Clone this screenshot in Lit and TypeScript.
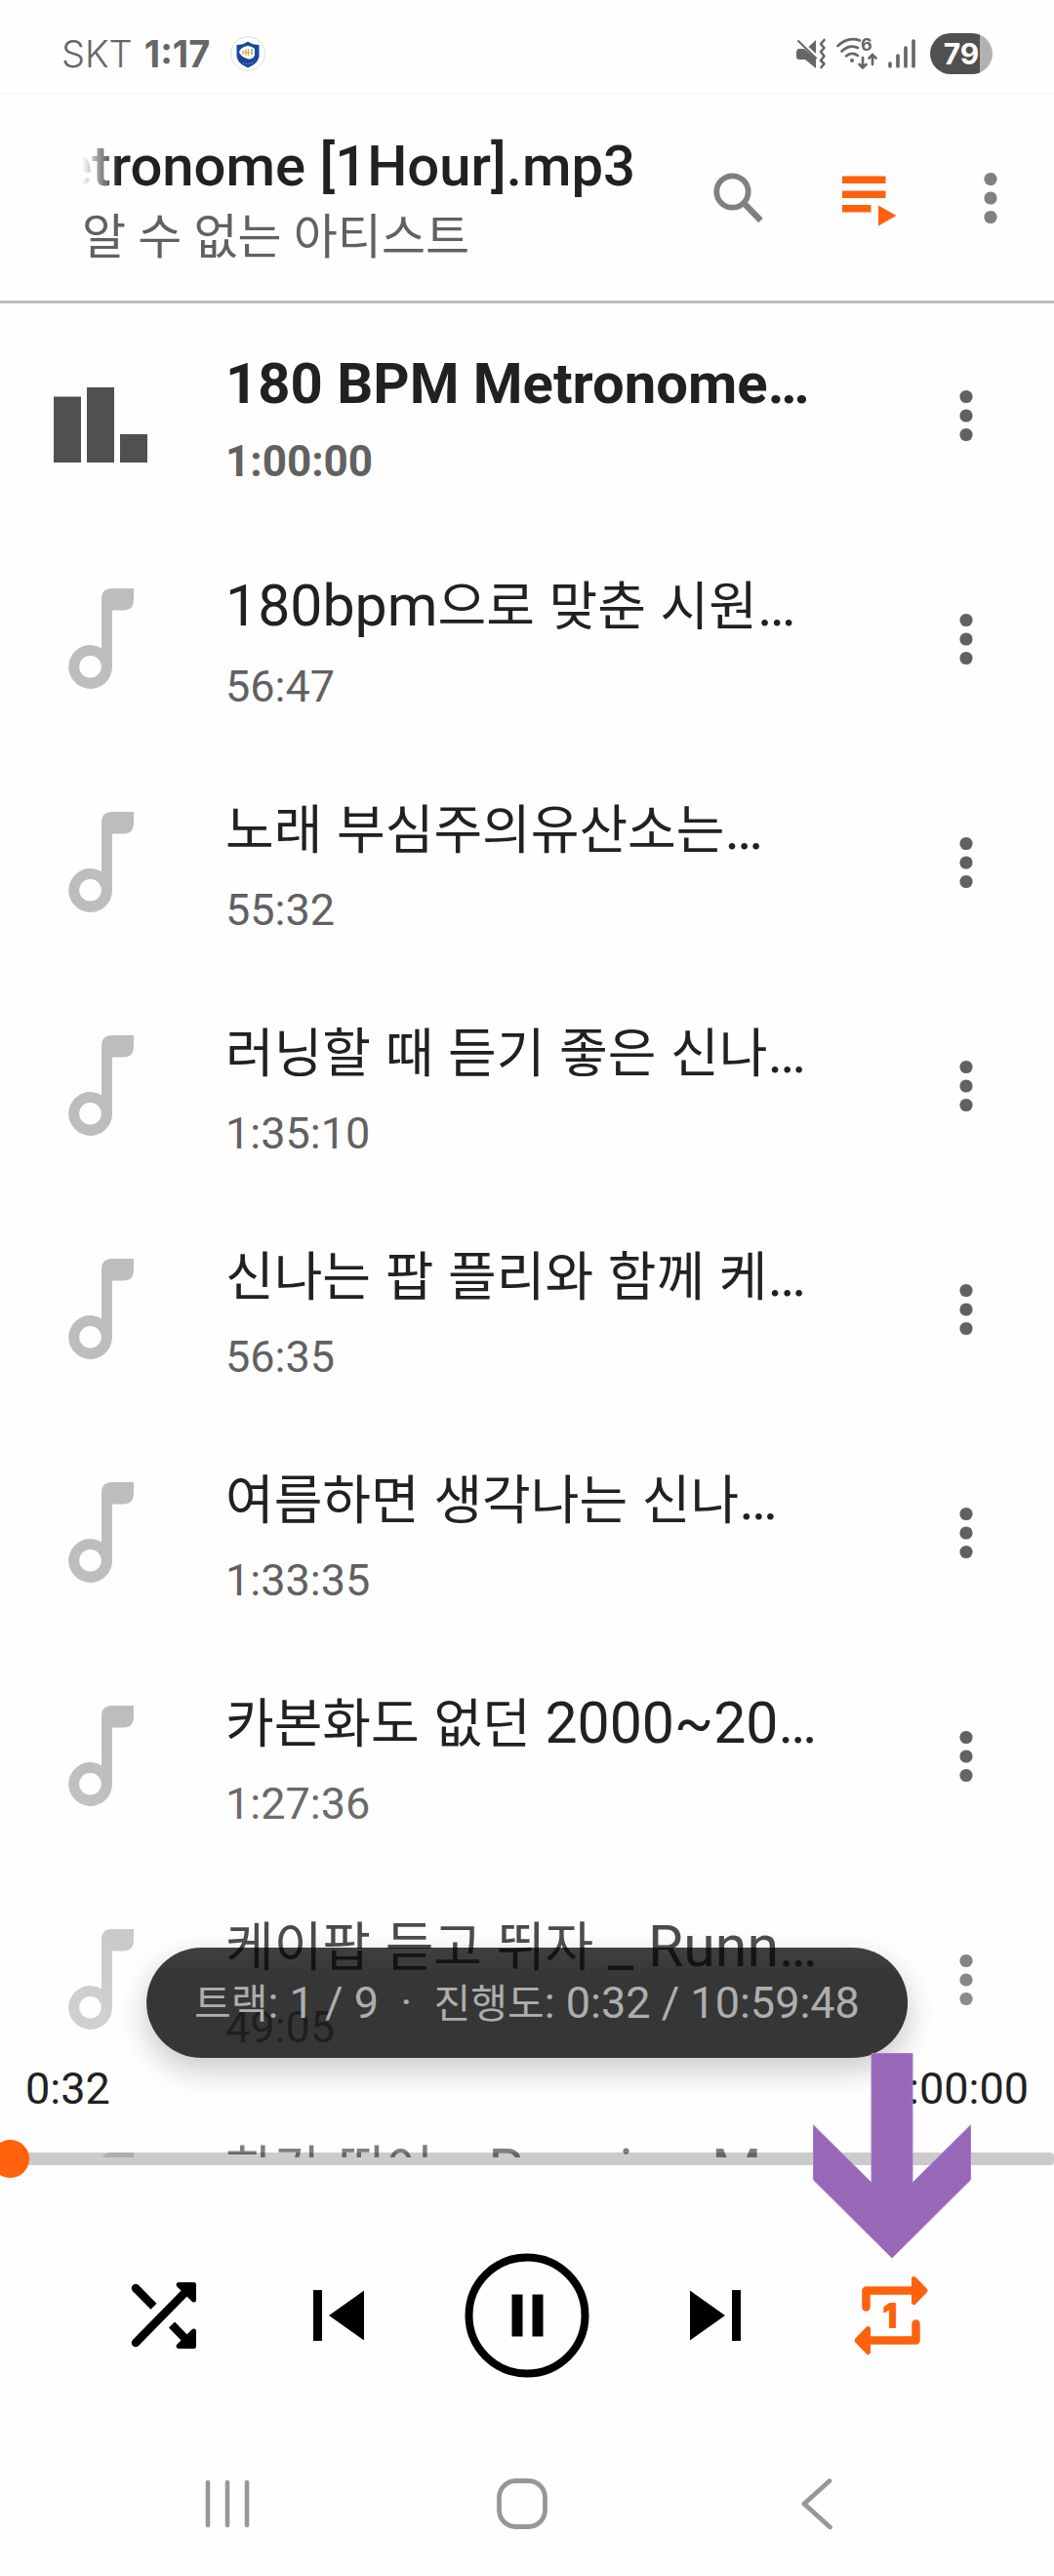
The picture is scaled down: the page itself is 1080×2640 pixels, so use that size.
import { LitElement, html, css } from "lit";
import { customElement, property, state } from "lit/decorators.js";

interface Track {
  title: string;
  length: string;
}

const TRACKS: Track[] = [
  { title: "180 BPM Metronome…", length: "1:00:00" },
  { title: "180bpm으로 맞춘 시원…", length: "56:47" },
  { title: "노래 부심주의유산소는…", length: "55:32" },
  { title: "러닝할 때 듣기 좋은 신나…", length: "1:35:10" },
  { title: "신나는 팝 플리와 함께 케…", length: "56:35" },
  { title: "여름하면 생각나는 신나…", length: "1:33:35" },
  { title: "카본화도 없던 2000~20…", length: "1:27:36" },
  { title: "케이팝 듣고 뛰자 _ Runn…", length: "49:05" },
  { title: "한강 뛰어 _ Running M…", length: "" },
];

/* Hangul runs are set a little smaller than the Latin text beside them. */
const mixed = (text: string) =>
  text
    .split(/([가-힣]+)/)
    .filter((part) => part)
    .map((part) => (/[가-힣]/.test(part) ? html`<span class="ko">${part}</span>` : part));

const moreIcon = html`<svg width="14" height="54" viewBox="0 0 14 54" fill="currentColor" aria-hidden="true">
  <circle cx="7" cy="7.5" r="6.6" />
  <circle cx="7" cy="27" r="6.6" />
  <circle cx="7" cy="46.5" r="6.6" />
</svg>`;

const buttonReset = css`
  button {
    appearance: none;
    border: 0;
    margin: 0;
    padding: 0;
    background: none;
    color: inherit;
    font: inherit;
    display: flex;
    align-items: center;
    justify-content: center;
  }
  svg {
    display: block;
    flex: none;
    overflow: visible;
  }
`;

@customElement("status-bar")
export class StatusBar extends LitElement {
  static styles = css`
    :host {
      display: flex;
      align-items: center;
      justify-content: space-between;
      box-sizing: border-box;
      height: 97px;
      padding: 16px 63px 0 63px;
      border-bottom: 3px solid #f9f9f9;
      color: #666;
    }
    svg {
      display: block;
      overflow: visible;
    }
    .left,
    .right {
      display: flex;
      align-items: center;
    }
    .carrier {
      font: 300 38px/48px Inter, Roboto, sans-serif;
    }
    .clock {
      margin: 0 21px 0 12px;
      font: 700 38px/48px Inter, Roboto, sans-serif;
    }
    .right {
      gap: 11px;
    }
    .six {
      font: 700 18px Inter, sans-serif;
    }
    .battery {
      display: flex;
      align-items: center;
      justify-content: center;
      width: 64px;
      height: 42px;
      margin-left: 4px;
      border-radius: 21px;
      background: linear-gradient(90deg, #505050 79%, #b1b1b1 79%);
      color: #fff;
      font: 700 30px/42px Inter, Roboto, sans-serif;
    }
  `;

  render() {
    return html`
      <div class="left">
        <span class="carrier">SKT</span>
        <span class="clock">1:17</span>
        <svg width="36" height="36" viewBox="0 0 36 36" aria-hidden="true">
          <circle cx="18" cy="18" r="17.3" fill="#fff" stroke="#dcdcdc" />
          <path d="M18 5.5Q23 9 29.500 9V21Q28 28.500 18 32.500Q8 28.500 6.500 21V9Q13 9 18 5.500Z" fill="#1b479b" />
          <path d="M11 13Q18 7 25 13V20Q22 25 17 23Q10 21 9 16Z" fill="#fff" />
          <path d="M13 14.500V19M16 13V20M18.500 13V20M14 16.500H20" stroke="#e8a33c" stroke-width="1.200" />
          <path d="M22 13V19" stroke="#4d9c8c" stroke-width="1.200" />
          <path d="M10 19Q14 25 22 25" stroke="#1b479b" fill="none" />
          <path d="M13 27.500Q18 29.500 23 27.500" stroke="#cfdcf2" stroke-dasharray="1 2" fill="none" />
        </svg>
      </div>
      <div class="right">
        <svg width="30" height="32" viewBox="0 0 30 32" fill="#666" aria-hidden="true">
          <path d="M1 12Q1 11 3 11H8L20 21V31L9 22H3Q0 22 0 19V14Z" />
          <path d="M20 2V16L12.500 9Z" />
          <path d="M2 3L20 20.500" stroke="#666" stroke-width="2" stroke-linecap="round" />
          <path
            d="M28.500 2L25 6L28.500 10L25 14L28.500 18.500L25 23L28.500 26.500L25.500 30"
            fill="none" stroke="#666" stroke-width="2.600" stroke-linecap="round" stroke-linejoin="round"
          />
        </svg>
        <svg width="42" height="34" viewBox="0 0 42 34" fill="none" stroke="#666" stroke-linecap="round" aria-hidden="true">
          <path d="M1.500 9Q12 -1 24 3.500" stroke-width="2.600" />
          <path d="M5.500 14.500Q13.500 7 22 11" stroke-width="2.600" />
          <path d="M10 19.500Q16 14.500 22 19" stroke-width="2.600" />
          <circle cx="16" cy="24" r="2" fill="#666" stroke="none" />
          <path d="M27 21V31M23.500 28L27 31.500L30.500 28" stroke-width="2.600" />
          <path d="M37 28V18.500M33.500 21.500L37 18L40.500 21.500" stroke-width="2.600" />
          <text class="six" x="25" y="14" fill="#666" stroke="none">6</text>
        </svg>
        <svg width="28" height="32" viewBox="0 0 28 32" stroke="#666" stroke-width="3.600" stroke-linecap="round" aria-hidden="true">
          <path d="M2 26V29M10 18V29M18 10V29M26 3V29" />
        </svg>
        <span class="battery">79</span>
      </div>
    `;
  }
}

@customElement("track-row")
export class TrackRow extends LitElement {
  @property({ attribute: false }) track!: Track;
  @property({ type: Boolean, reflect: true }) current = false;

  static styles = [
    buttonReset,
    css`
      :host {
        display: flex;
        align-items: center;
        height: 229px;
        padding: 0 50px 0 55px;
      }
      .art {
        display: flex;
        justify-content: center;
        width: 96px;
        margin-right: 80px;
      }
      .text {
        flex: 1;
        min-width: 0;
        white-space: nowrap;
      }
      .title {
        height: 98px;
        font-size: 59px;
        line-height: 98px;
        color: #212121;
      }
      .ko {
        font-size: 54px;
      }
      .length {
        height: 68px;
        font-size: 45px;
        line-height: 68px;
        color: #616161;
      }
      :host([current]) .title {
        height: 94px;
        font-size: 58px;
        font-weight: 700;
        line-height: 94px;
      }
      :host([current]) .length {
        height: 66px;
        font-size: 44px;
        font-weight: 700;
        line-height: 66px;
      }
      .more {
        width: 80px;
        height: 96px;
        color: #616161;
      }
    `,
  ];

  render() {
    return html`
      <div class="art">
        ${this.current
          ? html`<svg width="96" height="96" viewBox="0 0 96 96" fill="#505050" aria-hidden="true">
              <path d="M0 28.500H28V96H0ZM34 19H62V96H34ZM68 67H96V96H68Z" />
            </svg>`
          : html`<svg width="67" height="103" viewBox="0 0 67 103" fill="#bdbdbd" aria-hidden="true">
              <path
                fill-rule="evenodd"
                d="M45 0H67V11.500Q67 22.500 56 22.500H45V80.500A22.400 22.400 0 1 1 34 61.200V11Q34 0 45 0ZM22.500 69A11.300 11.300 0 1 0 22.500 91.600A11.300 11.300 0 1 0 22.500 69Z"
              />
            </svg>`}
      </div>
      <div class="text">
        <div class="title">${mixed(this.track.title)}</div>
        <div class="length">${this.track.length}</div>
      </div>
      <button class="more" aria-label="더보기">${moreIcon}</button>
    `;
  }
}

@customElement("app-root")
export class AppRoot extends LitElement {
  @state() private position = 32;

  static styles = [
    buttonReset,
    css`
      :host {
        display: flex;
        flex-direction: column;
        height: 100vh;
        overflow: hidden;
        background: #fefefe;
        color: #212121;
        font-family: Roboto, "Noto Sans CJK KR", sans-serif;
      }
      .header {
        display: flex;
        align-items: center;
        box-sizing: border-box;
        height: 214px;
        padding: 0 25px 0 84px;
        border-bottom: 3px solid #bdbdbd;
      }
      .playing {
        flex: 1;
        min-width: 0;
        margin-right: 66px;
      }
      .song {
        display: flex;
        justify-content: flex-end;
        overflow: hidden;
        height: 82px;
        margin: 0;
        font-size: 58px;
        font-weight: 500;
        line-height: 82px;
        white-space: nowrap;
        mask-image: linear-gradient(90deg, transparent, #000 38px);
      }
      .artist {
        height: 66px;
        margin: 0;
        font-size: 49px;
        line-height: 66px;
        color: #616161;
      }
      .actions {
        display: flex;
        gap: 49px;
        color: #808080;
      }
      .action {
        width: 80px;
        height: 96px;
      }
      .playlist {
        position: relative;
        flex: 1;
        min-height: 0;
      }
      .tracks {
        height: 100%;
        overflow: hidden;
        margin: 0;
        padding: 0;
        list-style: none;
      }
      .fade {
        position: absolute;
        inset: auto 0 0 0;
        height: 420px;
        background: linear-gradient(rgba(254, 254, 254, 0), rgba(254, 254, 254, 0.43));
        pointer-events: none;
      }
      .progress {
        position: absolute;
        inset: auto 0 -8px 0;
      }
      .times {
        display: flex;
        justify-content: space-between;
        padding: 0 26px;
        margin-bottom: 38px;
        font-size: 45px;
        line-height: 54px;
      }
      .rail {
        display: flex;
        height: 13px;
        border-radius: 0 4px 4px 0;
        background: rgba(0, 0, 0, 0.2);
      }
      .seek {
        flex: 1;
        appearance: none;
        height: 39px;
        margin: -13px -19px;
        background: none;
      }
      .seek::-webkit-slider-thumb {
        appearance: none;
        width: 39px;
        height: 39px;
        border-radius: 50%;
        background: #ff610c;
      }
      .toast {
        position: absolute;
        bottom: 102px;
        left: 50%;
        transform: translateX(-50%);
        padding: 0 49px;
        border-radius: 57px;
        background: linear-gradient(rgba(0, 0, 0, 0.75), rgba(0, 0, 0, 0.79) 30px);
        box-shadow: 0 12px 32px rgba(0, 0, 0, 0.22);
        color: #aeaeae;
        font-size: 45px;
        line-height: 113px;
        height: 113px;
        white-space: pre;
      }
      .toast .ko {
        font-size: 41px;
      }
      .controls {
        display: flex;
        align-items: center;
        justify-content: center;
        gap: 78px;
        padding: 98px 0 55px;
        color: #000;
      }
      .control {
        width: 102px;
        height: 102px;
      }
      .play {
        width: 128px;
        height: 128px;
      }
      .repeat {
        position: relative;
        color: #ff610c;
      }
      .one {
        font: 700 33px Inter, sans-serif;
      }
      .pointer {
        position: absolute;
        left: -29px;
        bottom: 109px;
      }
      .system {
        display: grid;
        grid-template-columns: repeat(3, 1fr);
        height: 148px;
        padding: 0 92px 0 82px;
        color: #979797;
      }
    `,
  ];

  private seek(event: Event) {
    this.position = Number((event.target as HTMLInputElement).value);
  }

  private get elapsed() {
    return `${Math.floor(this.position / 60)}:${String(this.position % 60).padStart(2, "0")}`;
  }

  render() {
    return html`
      <status-bar></status-bar>
      <header class="header">
        <div class="playing">
          <h1 class="song">180 BPM Metronome [1Hour].mp3</h1>
          <p class="artist">알 수 없는 아티스트</p>
        </div>
        <div class="actions">
          <button class="action" aria-label="검색">
            <svg width="52" height="52" viewBox="0 0 52 52" fill="none" stroke="currentColor" aria-hidden="true">
              <circle cx="19.500" cy="19.500" r="16.200" stroke-width="5.800" />
              <path d="M32.500 32.500L48.500 49" stroke-width="6.400" />
              <path d="M31 31L34 34" stroke-width="5" />
            </svg>
          </button>
          <button class="action" aria-label="재생목록">
            <svg width="46" height="52" viewBox="0 0 46 52" fill="#ff610c" aria-hidden="true">
              <path d="M0 3.500H44.500V11H0ZM0 18.500H44.500V26H0ZM0 33H29.500V40.500H0ZM37 33.500L55.500 44L37 54.500Z" />
            </svg>
          </button>
          <button class="action" aria-label="더보기">${moreIcon}</button>
        </div>
      </header>
      <main class="playlist">
        <ul class="tracks">
          ${TRACKS.map(
            (track, index) => html`<li><track-row .track=${track} ?current=${index === 0}></track-row></li>`,
          )}
        </ul>
        <div class="fade"></div>
        <div class="progress">
          <div class="times"><span>${this.elapsed}</span><span>1:00:00</span></div>
          <div class="rail">
            <input
              class="seek" type="range" min="0" max="3600"
              .value=${String(this.position)} @input=${this.seek} aria-label="재생 위치"
            />
          </div>
        </div>
        <div class="toast" role="status">${mixed("트랙: 1 / 9  ·  진행도: 0:32 / 10:59:48")}</div>
      </main>
      <div class="controls">
        <button class="control" aria-label="셔플">
          <svg width="68" height="68" viewBox="0 0 68 68" fill="none" stroke="currentColor" stroke-width="8.500" aria-hidden="true">
            <path d="M6 62L58 9" stroke-linecap="round" />
            <circle cx="6" cy="6" r="4.250" fill="currentColor" stroke="none" />
            <path d="M6 6L24.500 24.800M43 43.500L59 60" />
            <path d="M50 2.500H65.500V18Z M50 65.500H65.500V50Z" fill="currentColor" stroke-width="5" stroke-linejoin="round" />
          </svg>
        </button>
        <button class="control" aria-label="이전 곡">
          <svg width="52" height="52" viewBox="0 0 52 52" fill="currentColor" aria-hidden="true">
            <path d="M0 0H9V52H0ZM52 0.500V51.500L16 26Z" />
          </svg>
        </button>
        <button class="play" aria-label="일시정지">
          <svg width="128" height="128" viewBox="0 0 128 128" aria-hidden="true">
            <circle cx="64" cy="64" r="59.500" fill="none" stroke="currentColor" stroke-width="8" />
            <path d="M48.500 42.500H59.500V85.500H48.500ZM69.500 42.500H80.500V85.500H69.500Z" fill="currentColor" />
          </svg>
        </button>
        <button class="control" aria-label="다음 곡">
          <svg width="52" height="52" viewBox="0 0 52 52" fill="currentColor" aria-hidden="true">
            <path d="M52 0H43V52H52ZM0 0.500V51.500L36 26Z" />
          </svg>
        </button>
        <button class="control repeat" aria-label="한 곡 반복">
          <svg width="76" height="80" viewBox="0 0 76 80" fill="none" stroke="currentColor" stroke-width="8.500" stroke-linecap="round" stroke-linejoin="round" aria-hidden="true">
            <path d="M12.500 31.500V14.500H62M63.500 48.500V65.500H14" />
            <path
              d="M61.500 2.500L73 14.500L61.500 26.500ZM14.500 53.500L3 65.500L14.500 77.500Z"
              fill="currentColor" stroke-width="5"
            />
            <text class="one" x="37" y="52" text-anchor="middle" fill="currentColor" stroke-width="2">1</text>
          </svg>
          <svg class="pointer" width="162" height="211" viewBox="0 0 162 211" aria-hidden="true">
            <path
              d="M60 0.500H102V133L161.500 74V130L81 210L0.500 130V74L60 133Z"
              fill="#9868b8" stroke="#a77acb" stroke-width="1"
            />
          </svg>
        </button>
      </div>
      <nav class="system" aria-label="시스템">
        <button aria-label="최근 앱">
          <svg width="46" height="50" viewBox="0 0 46 50" stroke="currentColor" stroke-width="4.600" stroke-linecap="round" aria-hidden="true">
            <path d="M3 3V47M23 3V47M43 3V47" />
          </svg>
        </button>
        <button aria-label="홈">
          <svg width="52" height="52" viewBox="0 0 52 52" fill="none" stroke="currentColor" stroke-width="4.800" aria-hidden="true">
            <rect x="2.500" y="2.500" width="47" height="47" rx="17" />
          </svg>
        </button>
        <button aria-label="뒤로">
          <svg width="32" height="52" viewBox="0 0 32 52" fill="none" stroke="currentColor" stroke-width="4.800" stroke-linecap="round" stroke-linejoin="round" aria-hidden="true">
            <path d="M29 2.500L3 26L29.500 50" />
          </svg>
        </button>
      </nav>
    `;
  }
}
